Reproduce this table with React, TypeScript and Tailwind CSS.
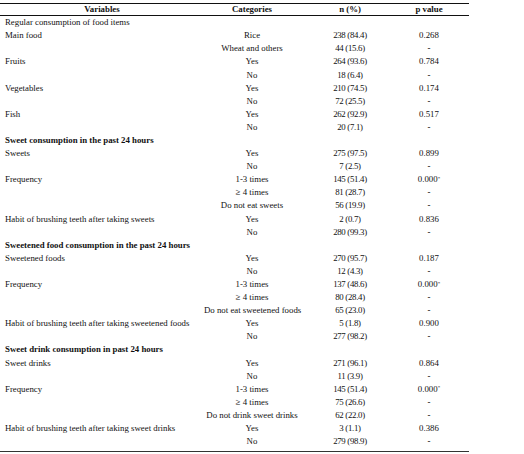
import React from "react";

type Row =
  | { kind: "section"; text: string; bold: boolean }
  | { kind: "data"; label?: string; cat: string; n: string; p: string; star?: boolean };

const rows: Row[] = [
  { kind: "section", text: "Regular consumption of food items", bold: false },
  { kind: "data", label: "Main food", cat: "Rice", n: "238 (84.4)", p: "0.268" },
  { kind: "data", cat: "Wheat and others", n: "44 (15.6)", p: "-" },
  { kind: "data", label: "Fruits", cat: "Yes", n: "264 (93.6)", p: "0.784" },
  { kind: "data", cat: "No", n: "18 (6.4)", p: "-" },
  { kind: "data", label: "Vegetables", cat: "Yes", n: "210 (74.5)", p: "0.174" },
  { kind: "data", cat: "No", n: "72 (25.5)", p: "-" },
  { kind: "data", label: "Fish", cat: "Yes", n: "262 (92.9)", p: "0.517" },
  { kind: "data", cat: "No", n: "20 (7.1)", p: "-" },
  { kind: "section", text: "Sweet consumption in the past 24 hours", bold: true },
  { kind: "data", label: "Sweets", cat: "Yes", n: "275 (97.5)", p: "0.899" },
  { kind: "data", cat: "No", n: "7 (2.5)", p: "-" },
  { kind: "data", label: "Frequency", cat: "1-3 times", n: "145 (51.4)", p: "0.000", star: true },
  { kind: "data", cat: "≥ 4 times", n: "81 (28.7)", p: "-" },
  { kind: "data", cat: "Do not eat sweets", n: "56 (19.9)", p: "-" },
  { kind: "data", label: "Habit of brushing teeth after taking sweets", cat: "Yes", n: "2 (0.7)", p: "0.836" },
  { kind: "data", cat: "No", n: "280 (99.3)", p: "-" },
  { kind: "section", text: "Sweetened food consumption in the past 24 hours", bold: true },
  { kind: "data", label: "Sweetened foods", cat: "Yes", n: "270 (95.7)", p: "0.187" },
  { kind: "data", cat: "No", n: "12 (4.3)", p: "-" },
  { kind: "data", label: "Frequency", cat: "1-3 times", n: "137 (48.6)", p: "0.000", star: true },
  { kind: "data", cat: "≥ 4 times", n: "80 (28.4)", p: "-" },
  { kind: "data", cat: "Do not eat sweetened foods", n: "65 (23.0)", p: "-" },
  { kind: "data", label: "Habit of brushing teeth after taking sweetened foods", cat: "Yes", n: "5 (1.8)", p: "0.900" },
  { kind: "data", cat: "No", n: "277 (98.2)", p: "-" },
  { kind: "section", text: "Sweet drink consumption in past 24 hours", bold: true },
  { kind: "data", label: "Sweet drinks", cat: "Yes", n: "271 (96.1)", p: "0.864" },
  { kind: "data", cat: "No", n: "11 (3.9)", p: "-" },
  { kind: "data", label: "Frequency", cat: "1-3 times", n: "145 (51.4)", p: "0.000", star: true },
  { kind: "data", cat: "≥ 4 times", n: "75 (26.6)", p: "-" },
  { kind: "data", cat: "Do not drink sweet drinks", n: "62 (22.0)", p: "-" },
  { kind: "data", label: "Habit of brushing teeth after taking sweet drinks", cat: "Yes", n: "3 (1.1)", p: "0.386" },
  { kind: "data", cat: "No", n: "279 (98.9)", p: "-" },
];

const grid = "grid grid-cols-[204px_96px_100px_58px] items-center";

function Cat({ text }: { text: string }) {
  if (text.startsWith("≥")) {
    return (
      <>
        <span className="font-bold">≥</span>
        {text.slice(1)}
      </>
    );
  }
  return <>{text}</>;
}

export default function App() {
  return (
    <div
      className="w-[524px] h-[454px] bg-white text-[#111] text-[8.8px] leading-none"
      style={{ fontFamily: '"Liberation Serif", serif' }}
    >
      <div className="w-[469px] pt-[3px]">
        <div className={`${grid} h-[13px] border-t-[1.5px] border-b border-[#111] font-bold`}>
          <div className="text-center">Variables</div>
          <div className="text-center">Categories</div>
          <div className="text-center">n (%)</div>
          <div className="text-center">p value</div>
        </div>
        <div className="border-b-[1.5px] border-[#333] pb-[3px]">
          {rows.map((r, i) =>
            r.kind === "section" ? (
              <div key={i} className={`h-[13.1px] flex items-center pl-[5px] ${r.bold ? "font-bold" : ""}`}>
                {r.text}
              </div>
            ) : (
              <div key={i} className={`${grid} h-[13.1px]`}>
                <div className="pl-[5px] whitespace-nowrap">{r.label ?? ""}</div>
                <div className="text-center whitespace-nowrap">
                  <Cat text={r.cat} />
                </div>
                <div className="text-center whitespace-nowrap tracking-[-0.3px]">{r.n}</div>
                <div className={`text-center whitespace-nowrap ${r.p === "-" ? "font-bold" : ""}`}>
                  {r.p}
                  {r.star ? <sup className="text-[5px]">*</sup> : null}
                </div>
              </div>
            )
          )}
        </div>
      </div>
    </div>
  );
}
